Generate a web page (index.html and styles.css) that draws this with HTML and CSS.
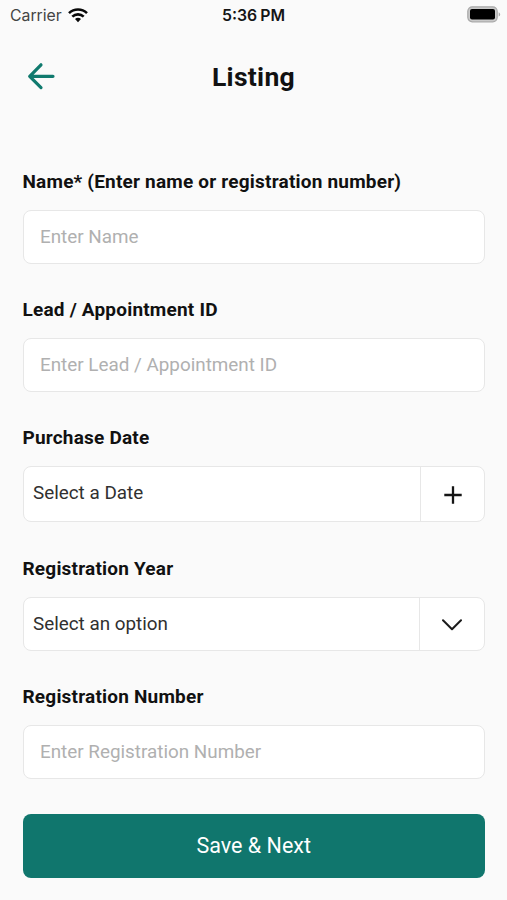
FILE: index.html
```html
<!DOCTYPE html>
<html lang="en">
<head>
<meta charset="utf-8">
<title>Listing</title>
<link rel="stylesheet" href="styles.css">
</head>
<body>
<div class="status">
  <div class="carrier"><span>Carrier</span>
    <svg width="20" height="15" viewBox="0 0 20 15" fill="none" stroke="#080808" stroke-width="2.6"><path d="M1 5.1C6.1.2 13.9.2 19 5.1"/><path d="M4.3 8.6c3.2-3 8.2-3 11.4 0"/><path d="M7 10.9c1.7-1.5 4.3-1.5 6 0L10 14.2z" fill="#080808" stroke="none"/></svg>
  </div>
  <span class="time">5:36<span>PM</span></span>
  <svg class="battery" width="34" height="17" viewBox="0 0 34 17"><rect x=".8" y=".8" width="29.4" height="15" rx="4.5" fill="#c9c9c9" stroke="#a9a9a9" stroke-width="1.2"/><rect x="3" y="3" width="25" height="10.5" rx="2" fill="#000"/><path d="M31.7 6.200c2 .9 2 3.500 0 4.400z" fill="#aaa"/></svg>
</div>
<header class="header">
  <svg class="back" width="30" height="28" viewBox="0 0 30 28" fill="none" stroke="#107a6e" stroke-width="3.200" stroke-linecap="round" stroke-linejoin="round"><path d="M27 14.300H3.700M15 2.800L3.700 14.300 15 25.600"/></svg>
  <h1 class="title">Listing</h1>
</header>
<form class="form">
  <div class="field"><label class="label" for="name">Name* (Enter name or registration number)</label>
    <input class="box" id="name" placeholder="Enter Name"></div>
  <div class="field"><label class="label" for="lead">Lead / Appointment ID</label>
    <input class="box" id="lead" placeholder="Enter Lead / Appointment ID"></div>
  <div class="field field-date"><span class="label">Purchase Date</span>
    <div class="picker date"><span class="value">Select a Date</span><span class="action">
      <svg width="18" height="18" viewBox="0 0 18 18" fill="none" stroke="#151515" stroke-width="2.300"><path d="M.3 9h17.400M9 .3v17.400"/></svg></span></div></div>
  <div class="field"><span class="label">Registration Year</span>
    <div class="picker year"><span class="value">Select an option</span><span class="action">
      <svg width="20" height="12" viewBox="0 0 20 12" fill="none" stroke="#1b1b1b" stroke-width="2" stroke-linecap="round" stroke-linejoin="round"><path d="M1 1.300l9 9 9-9"/></svg></span></div></div>
  <div class="field"><label class="label" for="number">Registration Number</label>
    <input class="box" id="number" placeholder="Enter Registration Number"></div>
  <button class="save" type="button">Save &amp; Next</button>
</form>
</body>
</html>
```
FILE: styles.css
```css
* { box-sizing: border-box; }
body {
  margin: 0;
  height: 900px;
  overflow: hidden;
  background: #fafafa;
  color: #111;
  font-family: Roboto, "Liberation Sans", sans-serif;
}
.status {
  display: grid;
  grid-template-columns: 1fr auto 1fr;
  align-items: center;
  height: 30px;
  padding: 0 6px 0 10px;
  font-family: Inter, "Liberation Sans", sans-serif;
  font-size: 15.800px;
}
.carrier { display: flex; align-items: center; gap: 6px; color: #444; }
.time { display: flex; gap: 3px; margin-right: 4px; color: #151515; font-weight: 600; }
.battery { justify-self: end; margin-top: -2px; }
.header {
  display: grid;
  grid-template-columns: 1fr auto 1fr;
  align-items: center;
  height: 94px;
  padding: 0 26px;
}
.back { margin-top: -2px; }
.title { margin: 0; font: 700 26.500px/32px Roboto, "Liberation Sans", sans-serif; letter-spacing: .3px; }
.form { padding: 47px 22px 0 22.500px; }
.field { margin-bottom: 35px; }
.field-date { margin-bottom: 36px; }
.label {
  display: block;
  height: 22px;
  margin-bottom: 17px;
  font-size: 19px;
  line-height: 22px;
  font-weight: 700;
  letter-spacing: .2px;
  white-space: nowrap;
}
.box, .picker {
  display: flex;
  width: 100%;
  height: 54px;
  border: 1.5px solid #e7e7e7;
  border-radius: 8px;
  background: #fff;
}
.box {
  padding: 0 16.500px;
  font: 400 18.850px/22px Roboto, "Liberation Sans", sans-serif;
  outline: none;
}
.box::placeholder { color: #b0b0b0; opacity: 1; }
.value {
  flex: 1;
  align-self: center;
  padding: 0 0 2px 9.500px;
  font-size: 18.850px;
  line-height: 22px;
  color: #303030;
}
.action {
  display: flex;
  align-items: center;
  justify-content: center;
  width: 64px;
  border-left: 1px solid #e7e7e7;
}
.date .action { padding-top: 1px; }
.date { height: 56px; }
.year .value { padding-bottom: 0; }
.year .action { width: 65px; padding-top: 2px; }
.save {
  display: block;
  width: 100%;
  height: 64px;
  border: 0;
  border-radius: 8px;
  background: #10766d;
  color: #fff;
  font: 400 21.500px/26px Roboto, "Liberation Sans", sans-serif;
}
```
